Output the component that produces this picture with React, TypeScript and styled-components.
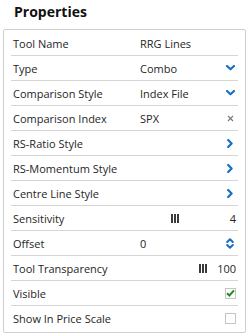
import React from "react";
import styled, { createGlobalStyle } from "styled-components";

const GlobalStyle = createGlobalStyle`
  body {
    margin: 0;
    background: #ffffff;
    font-family: "Open Sans", "Liberation Sans", sans-serif;
    color: #262626;
  }
`;

const Screen = styled.div`
  width: 251px;
  height: 336px;
  overflow: hidden;
`;

const Title = styled.h2`
  margin: 0;
  height: 29px;
  padding-left: 14px;
  font-size: 14px;
  font-weight: 700;
  line-height: 23px;
  color: #111;
`;

const Panel = styled.div`
  margin-left: 3px;
  width: 243px;
  height: 304px;
  box-sizing: border-box;
  border: 1px solid #cfcfcf;
  border-radius: 2px;
  padding: 1px 7px 0 7px;
`;

const Row = styled.div<{ $last?: boolean }>`
  display: grid;
  grid-template-columns: 127px 1fr auto;
  align-items: center;
  height: 24px;
  padding: 0 2px;
  font-size: 11px;
  border-bottom: ${(p) => (p.$last ? "none" : "1px solid #d4d4d4")};
`;

const Label = styled.span`
  white-space: nowrap;
`;

const Value = styled.span`
  white-space: nowrap;
`;

const IconCell = styled.span`
  display: flex;
  align-items: center;
  justify-content: center;
  width: 12px;
`;

const SliderCell = styled.span<{ $barsOffset: number }>`
  grid-column: 2 / 4;
  display: flex;
  align-items: center;
  justify-content: flex-end;
  gap: ${(p) => p.$barsOffset}px;
`;

const Checkbox = styled.span`
  display: flex;
  align-items: center;
  justify-content: center;
  width: 11px;
  height: 11px;
  box-sizing: border-box;
  border: 1px solid #c4c4c4;
  background: #fff;
`;

const BLUE = "#1670c4";

const ChevronDown = () => (
  <svg width="9" height="6" viewBox="0 0 9 6">
    <path d="M1 1 L4.5 4.3 L8 1" fill="none" stroke={BLUE} strokeWidth="2.2" strokeLinecap="round" strokeLinejoin="round" />
  </svg>
);

const ChevronRight = () => (
  <svg width="6" height="9" viewBox="0 0 6 9">
    <path d="M1.2 1 L4.6 4.5 L1.2 8" fill="none" stroke={BLUE} strokeWidth="2.2" strokeLinecap="round" strokeLinejoin="round" />
  </svg>
);

const UpDown = () => (
  <svg width="8" height="11" viewBox="0 0 8 11">
    <path d="M1.2 4 L4 1.3 L6.8 4" fill="none" stroke={BLUE} strokeWidth="2" strokeLinecap="round" strokeLinejoin="round" />
    <path d="M1.2 7 L4 9.7 L6.8 7" fill="none" stroke={BLUE} strokeWidth="2" strokeLinecap="round" strokeLinejoin="round" />
  </svg>
);

const Cross = () => (
  <svg width="7" height="7" viewBox="0 0 7 7">
    <path d="M1 1 L6 6 M6 1 L1 6" stroke="#777" strokeWidth="1.1" />
  </svg>
);

const Bars = () => (
  <svg width="8" height="9" viewBox="0 0 8 9">
    <rect x="0" y="0" width="2" height="9" fill="#3a3a3a" />
    <rect x="3" y="0" width="2" height="9" fill="#3a3a3a" />
    <rect x="6" y="0" width="2" height="9" fill="#3a3a3a" />
  </svg>
);

const Check = () => (
  <svg width="9" height="8" viewBox="0 0 9 8">
    <path d="M1 4.2 L3.4 6.5 L8 1.4" fill="none" stroke="#1f8f1f" strokeWidth="2" />
  </svg>
);

type Item = {
  label: string;
  value?: string;
  icon?: React.ReactNode;
  slider?: { value: string; offset: number };
};

const items: Item[] = [
  { label: "Tool Name", value: "RRG Lines" },
  { label: "Type", value: "Combo", icon: <ChevronDown /> },
  { label: "Comparison Style", value: "Index File", icon: <ChevronDown /> },
  { label: "Comparison Index", value: "SPX", icon: <Cross /> },
  { label: "RS-Ratio Style", icon: <ChevronRight /> },
  { label: "RS-Momentum Style", icon: <ChevronRight /> },
  { label: "Centre Line Style", icon: <ChevronRight /> },
  { label: "Sensitivity", slider: { value: "4", offset: 51 } },
  { label: "Offset", value: "0", icon: <UpDown /> },
  { label: "Tool Transparency", slider: { value: "100", offset: 10 } },
  {
    label: "Visible",
    icon: (
      <Checkbox>
        <Check />
      </Checkbox>
    ),
  },
  { label: "Show In Price Scale", icon: <Checkbox /> },
];

const App: React.FC = () => {
  return (
    <Screen>
      <GlobalStyle />
      <Title>Properties</Title>
      <Panel>
        {items.map((item, i) => (
          <Row key={item.label} $last={i === items.length - 1}>
            <Label>{item.label}</Label>
            {item.slider ? (
              <SliderCell $barsOffset={item.slider.offset}>
                <Bars />
                <Value>{item.slider.value}</Value>
              </SliderCell>
            ) : (
              <>
                <Value>{item.value ?? ""}</Value>
                <IconCell>{item.icon}</IconCell>
              </>
            )}
          </Row>
        ))}
      </Panel>
    </Screen>
  );
};

export default App;
